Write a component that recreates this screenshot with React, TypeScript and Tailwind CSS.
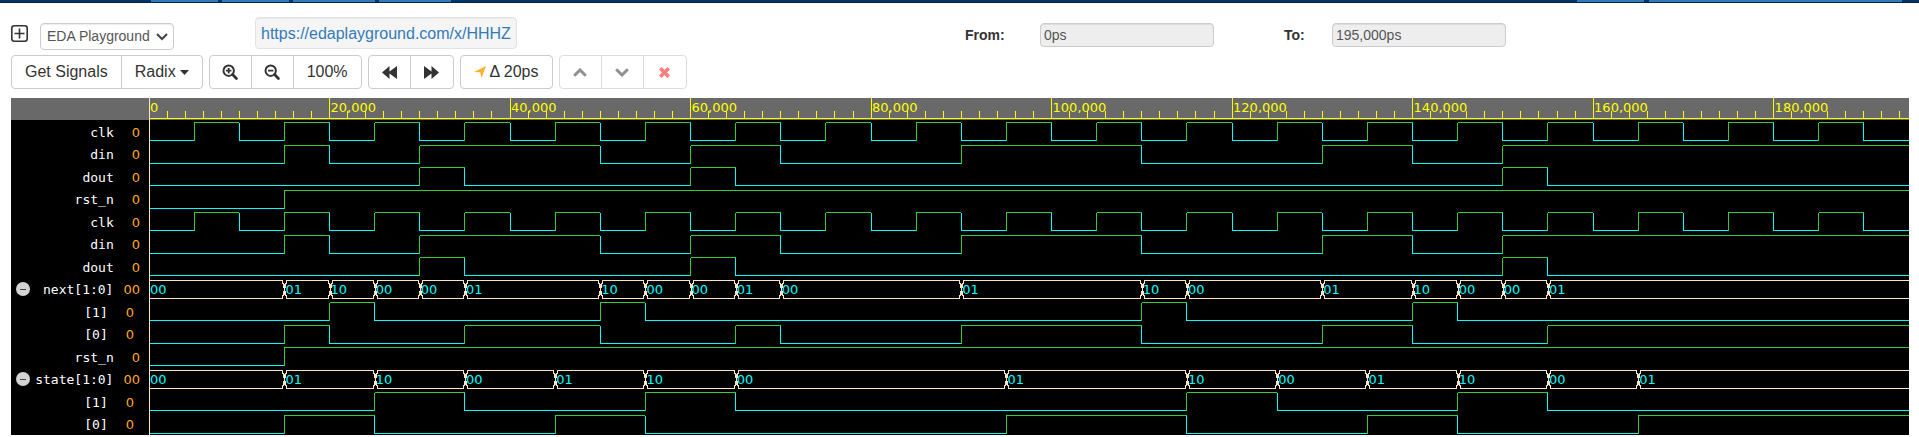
import React from "react";

type Span = [number, number];
type BusValue = [number, string];
type Row =
  | { kind: "bit"; name: string; value: string; high: Span[]; child?: boolean }
  | { kind: "bus"; name: string; value: string; values: BusValue[] };

const END = 39;
const pct = (step: number) => `${(step / END) * 100}%`;

const clk: Span[] = Array.from({ length: 19 }, (_, i) => [i * 2 + 1, i * 2 + 2] as Span);
clk.push([39, 39]);
const din: Span[] = [[3, 4], [6, 10], [12, 14], [18, 22], [26, 28], [30, END]];
const dout: Span[] = [[6, 7], [12, 13], [30, 31]];
const rst: Span[] = [[3, END]];

const rows: Row[] = [
  { kind: "bit", name: "clk", value: "0", high: clk },
  { kind: "bit", name: "din", value: "0", high: din },
  { kind: "bit", name: "dout", value: "0", high: dout },
  { kind: "bit", name: "rst_n", value: "0", high: rst },
  { kind: "bit", name: "clk", value: "0", high: clk },
  { kind: "bit", name: "din", value: "0", high: din },
  { kind: "bit", name: "dout", value: "0", high: dout },
  {
    kind: "bus", name: "next[1:0]", value: "00",
    values: [[0, "00"], [3, "01"], [4, "10"], [5, "00"], [6, "00"], [7, "01"], [10, "10"], [11, "00"], [12, "00"], [13, "01"], [14, "00"], [18, "01"], [22, "10"], [23, "00"], [26, "01"], [28, "10"], [29, "00"], [30, "00"], [31, "01"]],
  },
  { kind: "bit", name: "[1]", value: "0", child: true, high: [[4, 5], [10, 11], [22, 23], [28, 29]] },
  { kind: "bit", name: "[0]", value: "0", child: true, high: [[3, 4], [7, 10], [13, 14], [18, 22], [26, 28], [31, END]] },
  { kind: "bit", name: "rst_n", value: "0", high: rst },
  {
    kind: "bus", name: "state[1:0]", value: "00",
    values: [[0, "00"], [3, "01"], [5, "10"], [7, "00"], [9, "01"], [11, "10"], [13, "00"], [19, "01"], [23, "10"], [25, "00"], [27, "01"], [29, "10"], [31, "00"], [33, "01"]],
  },
  { kind: "bit", name: "[1]", value: "0", child: true, high: [[5, 7], [11, 13], [23, 25], [29, 31]] },
  { kind: "bit", name: "[0]", value: "0", child: true, high: [[3, 5], [9, 11], [19, 23], [27, 29], [33, END]] },
];

const HIGH = "#32cd32";
const LOW = "#00ffff";
const BUS = "#ffe4c4";

function Cursor() {
  return <line x1=".5" x2=".5" y1="0" y2="100%" stroke={BUS} />;
}

function BitWave({ high }: { high: Span[] }) {
  const lows: Span[] = [];
  let at = 0;
  for (const [a, b] of high) {
    if (a > at) lows.push([at, a]);
    at = b;
  }
  if (at < END) lows.push([at, END]);
  return (
    <svg className="block h-full w-full overflow-hidden" shapeRendering="crispEdges" aria-hidden="true">
      {lows.map(([a, b]) => (
        <line key={`l${a}`} x1={pct(a)} x2={pct(b)} y1="20.5" y2="20.5" stroke={LOW} />
      ))}
      {high.map(([a, b]) => (
        <React.Fragment key={`h${a}`}>
          <line x1={pct(a)} x2={pct(b)} y1="2.5" y2="2.5" stroke={HIGH} />
          <line x1={pct(a)} x2={pct(a)} y1="3" y2="21" stroke={HIGH} />
          {b < END && <line x1={pct(b)} x2={pct(b)} y1="3" y2="21" stroke={LOW} />}
        </React.Fragment>
      ))}
      <Cursor />
    </svg>
  );
}

function BusWave({ values }: { values: BusValue[] }) {
  return (
    <svg className="block h-full w-full overflow-hidden" shapeRendering="crispEdges">
      <line x1="0" x2="100%" y1="2.5" y2="2.5" stroke={BUS} />
      <line x1="0" x2="100%" y1="20.5" y2="20.5" stroke={BUS} />
      <Cursor />
      {values.map(([at, text]) => (
        <svg key={at} x={pct(at)} overflow="visible">
          {at > 0 && (
            <>
              <rect x="-1" y="2" width="3" height="19" fill="#000" />
              <path d="M-1.5 2V6M2.5 2V6M-.5 5V10M1.5 5V10M.5 6V17M-.5 13V18M1.5 13V18M-1.5 17V21M2.5 17V21" stroke={BUS} fill="none" />
            </>
          )}
          <text x="1" y="16" fill={LOW} className="font-['DejaVu_Sans',sans-serif] text-[13px]">
            {text}
          </text>
        </svg>
      ))}
    </svg>
  );
}

function Ruler() {
  return (
    <svg className="block h-[22px] w-full overflow-hidden" shapeRendering="crispEdges">
      <line x1="0" x2="100%" y1="20.5" y2="20.5" stroke="#ff0" />
      {Array.from({ length: 97 }, (_, i) => i + 1).map((i) => (
        <line key={i} x1={pct(i * 0.4)} x2={pct(i * 0.4)} y1={i % 10 === 0 ? 0 : 13} y2="20" stroke="#ff0" />
      ))}
      <Cursor />
      {Array.from({ length: 10 }, (_, i) => (
        <svg key={i} x={pct(i * 4)} overflow="visible">
          <text x="1" y="14" fill="#ff0" className="font-['DejaVu_Sans',sans-serif] text-[13px]">
            {(i * 20000).toLocaleString("en-US")}
          </text>
        </svg>
      ))}
    </svg>
  );
}

function SignalLabel({ row }: { row: Row }) {
  const child = row.kind === "bit" && row.child;
  return (
    <div className="flex min-h-0 items-center">
      {row.kind === "bus" && (
        <button type="button" aria-label={`Collapse ${row.name}`} className="ml-[5px]">
          <svg className="block size-[14px]" viewBox="0 0 14 14">
            <circle cx="7" cy="7" r="7" fill="#d3d3d3" />
            <path d="M4 7.5H10" stroke="#444" />
          </svg>
        </button>
      )}
      <span className={`ml-auto pt-[3px] ${row.kind === "bus" ? "pr-[10px]" : "pr-[18px]"}`}>{row.name}</span>
      <span className={`pt-[3px] font-['DejaVu_Sans',sans-serif] text-[#ffa726] ${child ? "pr-[15px]" : "pr-[9px]"}`}>{row.value}</span>
    </div>
  );
}

function Group({ children, faded }: { children: React.ReactNode; faded?: boolean }) {
  return (
    <div className={`flex h-[34px] divide-x divide-[#ccc] overflow-hidden rounded border border-[#ccc] bg-white ${faded ? "opacity-65" : ""}`}>
      {children}
    </div>
  );
}

function Tool({ children, label, wide, disabled }: { children: React.ReactNode; label?: string; wide?: boolean; disabled?: boolean }) {
  return (
    <button
      type="button"
      aria-label={label}
      disabled={disabled}
      className={`flex items-center justify-center gap-1 whitespace-nowrap text-[16px] text-[#333] ${wide ? "px-[13px]" : "w-[42px]"}`}
    >
      {children}
    </button>
  );
}

function Magnifier({ plus }: { plus?: boolean }) {
  return (
    <svg className="size-4" viewBox="0 0 16 16" fill="none" stroke="#333">
      <circle cx="6.7" cy="6.7" r="5.2" strokeWidth="2" />
      <path d="M10.6 10.6L14.4 14.4" strokeWidth="2.8" strokeLinecap="round" />
      <path d={plus ? "M4 6.7H9.4M6.7 4V9.4" : "M4 6.7H9.4"} strokeWidth="1.8" />
    </svg>
  );
}

const fieldClass =
  "h-6 w-[174px] rounded border border-[#ccc] bg-[#eee] px-[3px] text-[#555] shadow-[inset_0_1px_1px_rgba(0,0,0,0.075)]";

export default function App() {
  return (
    <main className="min-h-screen bg-white font-['Liberation_Sans',Arial,sans-serif] text-[#333]">
      <div className="flex h-[3px] justify-between border-b border-[#00264d] bg-[#003366] pr-[17px] pl-[151px]">
        <div className="flex gap-1">
          <div className="w-[67px] bg-[#337ab7]" />
          <div className="w-[67px] bg-[#337ab7]" />
          <div className="w-[82px] bg-[#337ab7]" />
          <div className="w-[72px] bg-[#337ab7]" />
        </div>
        <div className="flex gap-[5px]">
          <div className="w-[67px] bg-[#337ab7]" />
          <div className="w-[253px] bg-[#337ab7]" />
        </div>
      </div>

      <header className="flex h-[52px] items-start pt-[14px] pl-[11px]">
        <button type="button" aria-label="Add" className="mt-2">
          <svg className="block size-[17px]" viewBox="0 0 17 17" fill="none" stroke="#333" strokeWidth="1.6">
            <rect x=".8" y=".8" width="15.4" height="15.4" rx="2.5" />
            <path d="M8.5 3.5V13.5M3.5 8.5H13.5" />
          </svg>
        </button>
        <div className="relative mt-1.5 ml-3">
          <select aria-label="Source" className="block h-[27px] w-[134px] appearance-none rounded border border-[#ccc] bg-white pl-1.5 text-[14px] text-[#555] shadow-[inset_0_1px_1px_rgba(0,0,0,0.075)]">
            <option>EDA Playground</option>
          </select>
          <svg className="pointer-events-none absolute top-[10px] right-1.5 h-2 w-3" viewBox="0 0 12 8" fill="none" stroke="#444" strokeWidth="2">
            <path d="M1 1L6 6L11 1" />
          </svg>
        </div>
        <a href="https://edaplayground.com/x/HHHZ" className="ml-[81px] flex h-8 items-center rounded border border-[#e3e3e3] bg-[#f5f5f5] px-[5px] pt-px text-[16px] text-[#337ab7] shadow-[inset_0_1px_1px_rgba(0,0,0,0.05)]">
          https://edaplayground.com/x/HHHZ
        </a>
        <div className="mt-1.5 ml-auto flex items-center pr-[413px] text-[14px]">
          <label htmlFor="from" className="w-[75px] font-bold">From:</label>
          <input id="from" readOnly value="0ps" className={fieldClass} />
          <label htmlFor="to" className="ml-[70px] w-12 font-bold">To:</label>
          <input id="to" readOnly value="195,000ps" className={fieldClass} />
        </div>
      </header>

      <div className="flex gap-1.5 px-[11px]">
        <Group>
          <Tool wide>Get Signals</Tool>
          <Tool wide>
            Radix
            <svg className="h-[5px] w-[9px]" viewBox="0 0 9 5"><path d="M0 0H9L4.5 5Z" fill="#333" /></svg>
          </Tool>
        </Group>
        <Group>
          <Tool label="Zoom in"><Magnifier plus /></Tool>
          <Tool label="Zoom out"><Magnifier /></Tool>
          <Tool wide>100%</Tool>
        </Group>
        <Group>
          <Tool label="Back">
            <svg className="h-[13px] w-[15px]" viewBox="0 0 14 12" fill="#333"><path d="M7 0V5L14 0V12L7 7V12L0 6Z" /></svg>
          </Tool>
          <Tool label="Forward">
            <svg className="h-[13px] w-[15px]" viewBox="0 0 14 12" fill="#333"><path d="M7 0V5L0 0V12L7 7V12L14 6Z" /></svg>
          </Tool>
        </Group>
        <Group>
          <Tool wide>
            <svg className="size-3" viewBox="0 0 12 12"><path d="M12 0L7.5 12L6.2 6.2L0 6Z" fill="#ffb02e" /></svg>
            Δ 20ps
          </Tool>
        </Group>
        <Group faded>
          <Tool label="Previous" disabled>
            <svg className="h-[9px] w-[14px]" viewBox="0 0 14 9" fill="none" stroke="#555" strokeWidth="3"><path d="M1.2 7.7L7 2L12.8 7.7" /></svg>
          </Tool>
          <Tool label="Next" disabled>
            <svg className="h-[9px] w-[14px]" viewBox="0 0 14 9" fill="none" stroke="#555" strokeWidth="3"><path d="M1.2 1.3L7 7L12.8 1.3" /></svg>
          </Tool>
          <Tool label="Remove" disabled>
            <svg className="size-[11px]" viewBox="0 0 11 11" stroke="#ff3b3b" strokeWidth="3.6"><path d="M1.3 1.3L9.7 9.7M9.7 1.3L1.3 9.7" /></svg>
          </Tool>
        </Group>
      </div>

      <section aria-label="Waveforms" className="mt-[9px] mr-[10px] ml-[11px] flex bg-black font-['DejaVu_Sans_Mono',monospace] text-[13px] leading-4 text-white">
        <div className="w-[138px] shrink-0">
          <div className="h-[22px] bg-[#696969]" />
          <div className="grid h-[315px] grid-rows-14">
            {rows.map((row, i) => <SignalLabel key={i} row={row} />)}
          </div>
        </div>
        <div className="min-w-0 flex-1">
          <div className="bg-[#696969]"><Ruler /></div>
          <div className="grid h-[315px] grid-rows-14">
            {rows.map((row, i) => (
              <div key={i} className="min-h-0">
                {row.kind === "bit" ? <BitWave high={row.high} /> : <BusWave values={row.values} />}
              </div>
            ))}
          </div>
        </div>
      </section>
    </main>
  );
}
